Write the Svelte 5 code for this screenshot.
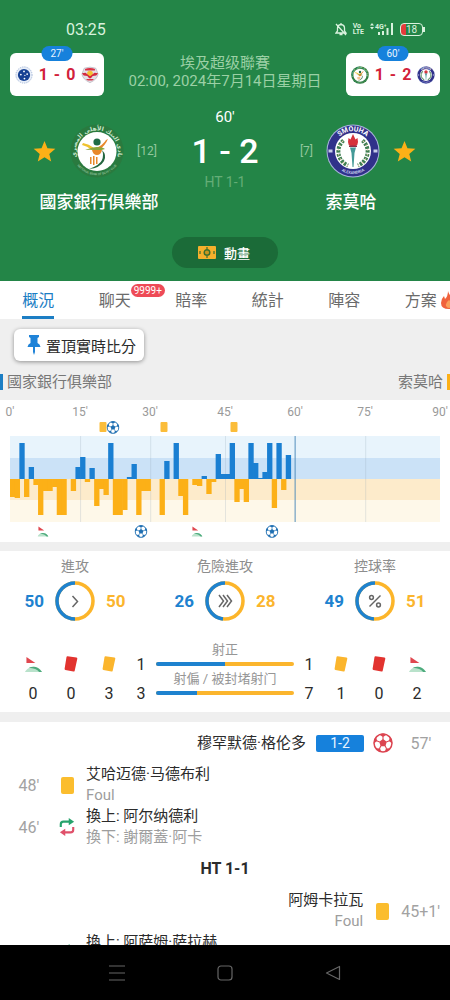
<script>
  const SLOTS = 92;
  const SLOT_W = 5;

  // [slot, height] pairs, one slot per minute of play
  const homeBars = [
    [2, 36], [4, 12], [14, 12], [15, 22], [17, 11], [21, 36], [25, 2], [26, 15],
    [33, 18], [35, 36], [41, 3], [44, 25], [45, 5], [46, 5], [47, 36], [51, 36],
    [52, 16], [53, 1], [54, 7], [55, 36], [57, 36], [59, 24]
  ];
  const awayBars = [
    [0, 18], [1, 19], [3, 18], [5, 6], [6, 36], [7, 12], [8, 12], [9, 8], [10, 36],
    [11, 36], [13, 12], [16, 3], [18, 27], [19, 10], [20, 16], [22, 36], [23, 36],
    [24, 31], [27, 36], [28, 12], [29, 12], [32, 36], [36, 17], [37, 36], [39, 6],
    [40, 7], [42, 15], [43, 3], [48, 23], [49, 10], [50, 23], [56, 29], [58, 11]
  ];
  const gridSlots = [15, 30, 46, 76];
  const minutes = [0, 15, 30, 45, 60, 75, 90];

  const homePins = [
    { kind: 'card', slot: 20 },
    { kind: 'ball', slot: 22 },
    { kind: 'card', slot: 33 },
    { kind: 'card', slot: 48 }
  ];
  const awayPins = [
    { kind: 'flag', slot: 7 },
    { kind: 'ball', slot: 28 },
    { kind: 'flag', slot: 40 },
    { kind: 'ball', slot: 56 }
  ];

  const tabs = ['概況', '聊天', '賠率', '統計', '陣容', '方案'];
  let active = $state('概況');

  const rings = [
    { label: '進攻', home: 50, away: 50, icon: 'one' },
    { label: '危險進攻', home: 26, away: 28, icon: 'three' },
    { label: '控球率', home: 49, away: 51, icon: 'percent' }
  ];

  const events = [
    { side: 'away', time: "57'", icon: 'goal', name: '穆罕默德·格伦多', score: '1-2' },
    { side: 'home', time: "48'", icon: 'yellow', name: '艾哈迈德·马德布利', note: 'Foul' },
    { side: 'home', time: "46'", icon: 'sub', name: '換上: 阿尔纳德利', note: '換下: 謝爾蓋·阿卡' },
    { side: 'half', name: 'HT 1-1' },
    { side: 'away', time: "45+1'", icon: 'yellow', name: '阿姆卡拉瓦', note: 'Foul' },
    { side: 'home', icon: 'sub', name: '換上: 阿萨姆·萨拉赫' }
  ];
</script>

{#snippet star()}
  <svg class="star" viewBox="0 0 24 24" aria-hidden="true">
    <path fill="#fcb017" d="M12 1l3.100 7.600 8.200.6-6.300 5.300 2 8-7-4.400-7 4.400 2-8L.7 9.200l8.200-.6z" />
  </svg>
{/snippet}

{#snippet ball(cls)}
  <svg class="ball {cls}" viewBox="0 0 24 24" aria-hidden="true">
    <circle cx="12" cy="12" r="10.800" fill="#fff" stroke="currentColor" stroke-width="1.800" />
    <g fill="currentColor">
      <path d="M12 7.300l4.500 3.300-1.700 5.200H9.200L7.500 10.600z" />
      <path d="M7.300 1.800L12 4.800l4.700-3A11 11 0 0 0 7.300 1.800z" />
      <path d="M1 12.500l4-3L3.600 4.500A11 11 0 0 0 1 12.500z" />
      <path d="M23 12.500l-4-3 1.400-5A11 11 0 0 1 23 12.500z" />
      <path d="M3.500 18.200l5 .3 1.500 4.700A11 11 0 0 1 3.500 18.200z" />
      <path d="M20.500 18.200l-5 .3-1.500 4.700a11 11 0 0 0 6.500-5z" />
    </g>
    <path fill="none" stroke="currentColor" stroke-width="1.300" d="M12 8V4M16 10.700l3.700-1.300M14.500 15.400l1.800 3.500M9.500 15.400l-1.800 3.500M8 10.700L4.300 9.400" />
  </svg>
{/snippet}

{#snippet flag(cls)}
  <svg class="flag {cls}" viewBox="0 0 18 18" aria-hidden="true">
    <path fill="#e0474f" d="M1.500 1l9.500 6.500H1.500z" />
    <path fill="#b9e2cb" d="M0 17c1-2.500 5-5.500 9-5.500s7.500 2.500 9 5.500z" />
    <path fill="#4dab7d" d="M4 12.500c5-2.500 10.500-1 14 4.500h-3q-3-4-11-4.500z" />
  </svg>
{/snippet}

{#snippet tilted(cls)}
  <svg class="tilted {cls}" viewBox="0 0 18 18" aria-hidden="true">
    <path fill="currentColor" d="M5.500 1.200l9 1.300q1 .2.800 1.200l-2.600 12q-.3 1-1.300.9l-8-1.700q-1-.3-.8-1.200l1.900-11.600q.2-1 1-.9z" />
  </svg>
{/snippet}

{#snippet bankLogo()}
  <svg class="logo" viewBox="0 0 54 54" aria-hidden="true">
    <defs>
      <path id="bank-top" d="M6.500 32a21 21 0 1 1 41 0" />
      <path id="bank-bottom" d="M4 36a25 25 0 0 0 46 0" />
    </defs>
    <circle cx="27" cy="27" r="26.500" fill="#2a7a3f" />
    <circle cx="27" cy="27.500" r="19.500" fill="#fff" />
    <text class="arabic"><textPath href="#bank-top" startOffset="50%" text-anchor="middle">نادي البنك الأهلي المصري</textPath></text>
    <text class="ring-latin"><textPath href="#bank-bottom" startOffset="50%" text-anchor="middle">NATIONAL BANK OF EGYPT CLUB</textPath></text>
    <circle cx="27" cy="18" r="3.600" fill="#1e6b45" />
    <path fill="#f0c22e" d="M13 19q6 1 11 5l-2 2q-5-4-10-5z" />
    <path fill="#e8882a" d="M38 15q-3 7-9 11l-3-2q7-3 10-8z" />
    <path fill="#8aa53a" d="M15 26q8-3 12-3 6 0 8 2l-7 2q-6-2-13-1z" />
    <path fill="#e8882a" d="M22 26h10q-1 5-5 5t-5-5zM20 33h1.500v7H20zM23 32h1.500v9H23zM26 33h1.500v7H26z" />
    <path fill="#24663f" d="M32 26q5 5 2 11-4 7-15 8 11-4 13-9 2-5 0-10z" />
  </svg>
{/snippet}

{#snippet smouhaLogo()}
  <svg class="logo" viewBox="0 0 54 54" aria-hidden="true">
    <defs>
      <path id="smouha-top" d="M7.300 27a19.700 19.700 0 0 1 39.400 0" />
      <path id="smouha-bottom" d="M4 27a23 23 0 0 0 46 0" />
    </defs>
    <circle cx="27" cy="27" r="26.500" fill="#aab4dc" />
    <circle cx="27" cy="27" r="25.500" fill="#30318a" />
    <circle cx="27" cy="27" r="18" fill="#fff" />
    <text class="ring-top"><textPath href="#smouha-top" startOffset="50%" text-anchor="middle">SMOUHA</textPath></text>
    <text class="ring-low"><textPath href="#smouha-bottom" startOffset="50%" text-anchor="middle">ALEXANDRIA</textPath></text>
    <g fill="none" stroke="#3f7f52">
      <path stroke-width="4" stroke-dasharray="2.500 1.200" d="M17.500 16.500C9 24 11.500 37 22 41.500M36.500 16.500C45 24 42.500 37 32 41.500" />
      <path stroke="#e3c9a8" stroke-width="1.300" stroke-dasharray="1.300 3.500" d="M17 17C9 24 11.500 37 22 41.500M37 17C45 24 42.500 37 32 41.500" />
    </g>
    <path fill="#d6323b" d="M22 18l.5-4 2 1.500L27 10l2.500 5.500 2-1.500.5 4q0 3-2.500 4h-5Q22 21 22 18z" />
    <path fill="#8f2f48" d="M23 21.500h8V23h-8z" />
    <path fill="#459a98" d="M24 23.500h6L28.500 29 27.500 43h-1L25.500 29z" />
    <path fill="#c6cdea" d="M2.500 25.500h4v3h-4zM47.500 25.500h4v3h-4z" />
  </svg>
{/snippet}

{#snippet cruzeiro()}
  <svg class="crest" viewBox="0 0 20 20" aria-hidden="true">
    <circle cx="10" cy="10" r="9" fill="#e8eef8" stroke="#9fb3d6" stroke-dasharray="1.500 1" />
    <circle cx="10" cy="10" r="6.800" fill="#174193" />
    <g fill="#fff">
      <circle cx="10" cy="6" r="1" /><circle cx="6.500" cy="9.500" r="1" />
      <circle cx="13.500" cy="9" r="1" /><circle cx="10.500" cy="14" r="1" /><circle cx="11" cy="10.500" r=".7" />
    </g>
  </svg>
{/snippet}

{#snippet bull()}
  <svg class="crest" viewBox="0 0 20 20" aria-hidden="true">
    <path fill="#e3e0e6" stroke="#b9b3bd" stroke-width=".8" d="M3.500 2.500Q10 0 16.500 2.500L19 9q-1 6-9 9.500Q2 15 1 9z" />
    <path fill="#dc3043" d="M4.500 3.200Q10 1.500 15.500 3.200V5h-11z" />
    <circle cx="10" cy="8.500" r="3.200" fill="#f5bf33" />
    <path fill="#d42a3e" d="M1 8l4-.5 4.500 3.500h1L15 7.500l4 .5-2 2.500-4 .5-2 2.500H9L7 11l-4-.5z" />
    <path fill="#d7374a" d="M5.500 14.500h9L12.500 16h-5z" />
  </svg>
{/snippet}

<div class="app">
  <header>
    <div class="status">
      <time>03:25</time>
      <div class="signals">
        <svg width="12" height="14" viewBox="0 0 12 14" aria-hidden="true">
          <path fill="none" stroke="#d9f2de" stroke-width="1.300" d="M1 11h10L9.500 9V6Q9.500 3 6 2.500 2.500 3 2.500 6v3zM6 1v1.500M4.500 12.500h3M1 2l10 11" />
        </svg>
        <span class="volte"><span>Vo</span><span>LTE</span></span>
        <svg width="24" height="14" viewBox="0 0 24 14" aria-hidden="true">
          <path fill="#d9f2de" d="M0 3.500L2 1l2 2.500zM0 5l2 2.500L4 5zM8 10h2v3H8zM12 9h2v4h-2zM16.500 6h2v7h-2zM21 1h2v12h-2z" />
          <text class="gen" x="5" y="7">4G⁺</text>
        </svg>
        <span class="battery">18</span>
      </div>
    </div>

    <div class="top">
      <a class="mini" href="#live-1">
        <span class="clock">27'</span>
        {@render cruzeiro()}
        <b><span>1</span><span>-</span><span>0</span></b>
        {@render bull()}
      </a>
      <div class="league">
        <span>埃及超级聯賽</span>
        <span>02:00, 2024年7月14日星期日</span>
      </div>
      <a class="mini" href="#live-2">
        <span class="clock">60'</span>
        <span class="crest">{@render bankLogo()}</span>
        <b><span>1</span><span>-</span><span>2</span></b>
        <span class="crest">{@render smouhaLogo()}</span>
      </a>
    </div>

    <div class="teams">
      <div class="team">
        <div class="badge-row">
          <button class="fav" aria-label="國家銀行俱樂部">{@render star()}</button>
          {@render bankLogo()}
          <span class="rank">[12]</span>
        </div>
        <strong>國家銀行俱樂部</strong>
      </div>
      <div class="score">
        <span class="minute">60'</span>
        <span class="result">1 - 2</span>
        <span class="ht">HT 1-1</span>
      </div>
      <div class="team">
        <div class="badge-row guest">
          <span class="rank">[7]</span>
          {@render smouhaLogo()}
          <button class="fav" aria-label="索莫哈">{@render star()}</button>
        </div>
        <strong>索莫哈</strong>
      </div>
    </div>

    <button class="animation">
      <svg width="18" height="13" viewBox="0 0 18 13" aria-hidden="true">
        <rect width="18" height="13" rx="1" fill="#f6b02c" />
        <path fill="none" stroke="#3c6f2c" stroke-width="1.200" d="M9 1v2M9 10v2M2 5v3M16 5v3" />
        <circle cx="9" cy="6.500" r="2.800" fill="#c9961f" stroke="#3c6f2c" stroke-width="1.400" />
      </svg>
      動畫
    </button>
  </header>

  <nav class="tabs">
    {#each tabs as tab}
      <button class:active={active === tab} onclick={() => (active = tab)}>
        <span class="tab-label">
          {tab}
          {#if tab === '聊天'}<span class="count">9999+</span>{/if}
          {#if tab === '方案'}
            <svg class="fire" viewBox="0 0 16 18" aria-hidden="true">
              <path fill="#f0623c" d="M7 0q1 4 4 6l1-2q4 4 4 8 0 6-8 6-8 0-8-6 0-4 3-7l1 3q3-3 3-8z" />
              <path fill="#f9a05a" d="M8 9q4 3 3 6-1 2-3 2t-3-2q-1-3 3-6z" />
            </svg>
          {/if}
        </span>
      </button>
    {/each}
  </nav>

  <main>
    <section class="intro">
      <button class="pin">
        <svg width="14" height="20" viewBox="0 0 14 20" aria-hidden="true">
          <path fill="#1f83d8" d="M2 0h10v2l-1.500 1v5Q13 9 13.500 12H8v5l-1 3-1-3v-5H.5Q1 9 3.500 8V3L2 2z" />
        </svg>
        置頂實時比分
      </button>
      <div class="legend"><span class="home">國家銀行俱樂部</span><span class="away">索莫哈</span></div>
    </section>

    <section class="momentum">
      <div class="scale">
        {#each minutes as m}<span>{m}'</span>{/each}
      </div>
      <div class="lane">
        {#each homePins as p}
          <span class="mark" style="left: {(p.slot / SLOTS) * 100}%">
            {#if p.kind === 'card'}<i class="mini-card"></i>{:else}{@render ball('small')}{/if}
          </span>
        {/each}
      </div>
      <svg class="chart" viewBox="0 0 460 86" preserveAspectRatio="none" role="img" aria-label="進攻">
        <rect width="460" height="22" fill="#e8f4fc" />
        <rect y="22" width="460" height="21" fill="#cbe2f7" />
        <rect y="43" width="460" height="21" fill="#fdebcb" />
        <rect y="64" width="460" height="22" fill="#fef8e9" />
        {#each gridSlots as s}
          <rect x={s * SLOT_W} width="1" height="86" fill="#8fa3b5" opacity=".25" />
        {/each}
        {#each homeBars as [s, h]}
          <rect x={s * SLOT_W} y={43 - h} width="5.700" height={h} fill="#1a7fd2" />
        {/each}
        {#each awayBars as [s, h]}
          <rect x={s * SLOT_W} y="43" width="5.700" height={h} fill="#fcb017" />
        {/each}
        <rect x="304.500" width="1" height="86" fill="#4a88b8" />
      </svg>
      <div class="lane">
        {#each awayPins as p}
          <span class="mark" style="left: {(p.slot / SLOTS) * 100}%">
            {#if p.kind === 'flag'}{@render flag('small')}{:else}{@render ball('small')}{/if}
          </span>
        {/each}
      </div>
    </section>

    <section class="stats">
      <div class="rings">
        {#each rings as r}
          <div class="ring-stat">
            <span class="label">{r.label}</span>
            <div class="ring-row">
              <b class="blue">{r.home}</b>
              <svg class="ring" viewBox="0 0 40 40" aria-hidden="true">
                <circle cx="20" cy="20" r="18" pathLength="100" stroke="#fcb52a" />
                <circle cx="20" cy="20" r="18" pathLength="100" stroke="#1e82cf"
                  stroke-dasharray="{(r.home / (r.home + r.away)) * 100} 100"
                  transform="rotate(-90 20 20) translate(0 40) scale(1 -1)" />
                {#if r.icon === 'one'}
                  <path d="M17.500 15l5 5.500-5 5.500" />
                {:else if r.icon === 'three'}
                  <path d="M14 14l4.500 6-4.500 6M18 14l4.500 6-4.500 6M22 14l4.500 6-4.500 6" />
                {:else}
                  <path d="M25.500 14.500l-11 11" /><circle class="dot" cx="16.500" cy="16.500" r="1.900" /><circle class="dot" cx="23.500" cy="24" r="1.900" />
                {/if}
              </svg>
              <b class="gold">{r.away}</b>
            </div>
          </div>
        {/each}
      </div>

      <div class="totals">
        <span>{@render flag('')}</span>
        <span>{@render tilted('red')}</span>
        <span>{@render tilted('gold')}</span>
        <span>1</span>
        <div class="bar"><em>射正</em><div class="track"><i style="width: 50%"></i></div></div>
        <span>1</span>
        <span>{@render tilted('gold')}</span>
        <span>{@render tilted('red')}</span>
        <span>{@render flag('')}</span>

        <span>0</span>
        <span>0</span>
        <span>3</span>
        <span>3</span>
        <div class="bar"><em>射偏 / 被封堵射门</em><div class="track"><i style="width: 30%"></i></div></div>
        <span>7</span>
        <span>1</span>
        <span>0</span>
        <span>2</span>
      </div>
    </section>

    <section class="timeline">
      {#each events as e}
        {#if e.side === 'half'}
          <div class="half">{e.name}</div>
        {:else}
          <div class="event {e.side}">
            <span class="when">{e.time ?? ''}</span>
            <span class="what">
              {#if e.icon === 'goal'}
                {@render ball('goal')}
              {:else if e.icon === 'yellow'}
                <i class="card"></i>
              {:else}
                <svg class="sub" viewBox="0 0 18 20" aria-hidden="true">
                  <path fill="none" stroke="#27a36c" stroke-width="2.400" d="M2 10V7q0-3 3-3h7" />
                  <path fill="#27a36c" d="M11 0l6 4-6 4z" />
                  <path fill="none" stroke="#e0506a" stroke-width="2.400" d="M16 10v3q0 3-3 3H6" />
                  <path fill="#e0506a" d="M7 12l-6 4 6 4z" />
                </svg>
              {/if}
            </span>
            {#if e.score}<span class="new-score">{e.score}</span>{/if}
            <div class="who">
              <span>{e.name}</span>
              {#if e.note}<small>{e.note}</small>{/if}
            </div>
          </div>
        {/if}
      {/each}
    </section>
  </main>

  <nav class="system">
    <button aria-label="Recent apps">
      <svg width="16" height="16" viewBox="0 0 16 16"><path d="M0 1h16M0 8h16M0 15h16" /></svg>
    </button>
    <button aria-label="Home">
      <svg width="16" height="16" viewBox="0 0 16 16"><rect x="1" y="1" width="14" height="14" rx="3" /></svg>
    </button>
    <button aria-label="Back">
      <svg width="16" height="16" viewBox="0 0 16 16"><path d="M14.500 1.500v13L1.500 8z" /></svg>
    </button>
  </nav>
</div>

<style>
  :global(body) { margin: 0; }
  .app {
    display: flex;
    flex-direction: column;
    height: 100vh;
    background: #fff;
    color: #2b2b2b;
    font-family: Roboto, "Noto Sans CJK TC", "Noto Sans CJK SC", sans-serif;
    font-size: 15px;
  }
  button {
    border: 0;
    padding: 0;
    background: none;
    font: inherit;
    color: inherit;
    cursor: pointer;
  }
  svg { display: block; flex: none; }

  header {
    flex: none;
    display: flex;
    flex-direction: column;
    background: #238547;
    color: #fff;
    padding-bottom: 13px;
  }
  .status {
    display: flex;
    justify-content: space-between;
    align-items: center;
    padding: 20px 27px 0 66px;
    height: 18px;
    color: #d9f2de;
    font-size: 16px;
  }
  .signals { display: flex; align-items: center; gap: 6px; }
  .volte { display: flex; flex-direction: column; font: 700 7px/6px Roboto, sans-serif; }
  .gen { font: 700 7px Roboto, sans-serif; fill: #d9f2de; }
  .battery {
    position: relative;
    box-sizing: border-box;
    width: 23px;
    height: 13px;
    border: 1px solid #d9f2de;
    border-radius: 4px;
    background: linear-gradient(90deg, #e33b3b 5px, transparent 5px);
    font-size: 10px;
    line-height: 11px;
    text-align: center;
  }
  .battery::after {
    content: "";
    position: absolute;
    right: -3px;
    top: 3px;
    width: 2px;
    height: 5px;
    background: #d9f2de;
  }

  .top { display: flex; justify-content: space-between; padding: 15px 10px 0; }
  .mini {
    position: relative;
    box-sizing: border-box;
    display: flex;
    align-items: center;
    justify-content: space-between;
    width: 94px;
    height: 43px;
    padding: 0 5px;
    border-radius: 6px;
    background: #fff;
    color: #d2213a;
    font-size: 16px;
    text-decoration: none;
  }
  .mini b { display: flex; gap: 6px; font-weight: 700; }
  .clock {
    position: absolute;
    top: -7px;
    left: 50%;
    width: 31px;
    transform: translateX(-50%);
    border-radius: 8px;
    background: #1681dc;
    color: #e9f4ff;
    font-size: 10px;
    line-height: 15px;
    text-align: center;
  }
  .crest { width: 18px; height: 18px; }
  .crest .logo { width: 18px; height: 18px; }
  .league {
    display: flex;
    flex-direction: column;
    align-items: center;
    color: #9bd0a5;
    font-size: 15px;
    line-height: 18px;
    padding-top: 1px;
    white-space: nowrap;
  }

  .teams { display: flex; justify-content: space-between; padding: 11px 33px 0; }
  .team { display: flex; flex-direction: column; align-items: center; width: 132px; }
  .team strong { font-size: 17px; font-weight: 500; line-height: 24px; margin-top: 12px; white-space: nowrap; }
  .badge-row {
    display: grid;
    grid-template-columns: 24px 54px 28px;
    justify-content: space-between;
    align-items: center;
    width: 100%;
    margin-top: 17px;
  }
  .badge-row.guest { grid-template-columns: 28px 54px 24px; }
  .guest .rank { text-align: right; }
  .logo { width: 54px; height: 54px; }
  .star { width: 23px; height: 23px; }
  .rank { color: #92c79d; font-size: 12px; }
  .arabic { font: 700 6px "DejaVu Sans", sans-serif; fill: #c9e6cc; }
  .ring-latin { font: 400 3px Roboto, sans-serif; fill: #a9d3ae; }
  .ring-top { font: 700 7px Roboto, sans-serif; fill: #fff; }
  .ring-low { font: 700 4px Roboto, sans-serif; fill: #c6cdea; }
  .score { display: flex; flex-direction: column; align-items: center; }
  .minute { font-size: 15px; line-height: 20px; }
  .result { font-size: 34px; line-height: 44px; font-weight: 500; margin-top: 2px; }
  .ht { color: #65ad77; font-size: 14px; line-height: 18px; }

  .animation {
    align-self: center;
    display: flex;
    align-items: center;
    gap: 8px;
    height: 31px;
    padding: 0 28px 0 26px;
    margin-top: 23px;
    border-radius: 16px;
    background: #1b6b38;
    font-size: 13px;
    font-weight: 500;
  }

  .tabs { flex: none; display: flex; height: 38px; overflow: hidden; }
  .tabs button { flex: 0 0 17%; display: flex; justify-content: center; color: #6b6b6b; font-size: 16px; }
  .tab-label {
    position: relative;
    box-sizing: border-box;
    height: 38px;
    line-height: 40px;
    border-bottom: 3px solid transparent;
    white-space: nowrap;
  }
  .active .tab-label { color: #1c7ec4; border-color: #1c7ec4; }
  .count {
    position: absolute;
    left: 32px;
    top: 3px;
    padding: 0 3px;
    border-radius: 7px;
    background: #ee4b57;
    color: #fff;
    font-size: 10px;
    line-height: 13px;
  }
  .fire { position: absolute; left: 36px; top: 10px; width: 16px; height: 18px; }

  main { flex: 1; min-height: 0; overflow: hidden; }
  section { background: #fff; }
  .intro { background: #efefef; padding: 10px 0 10px; }
  .pin {
    display: flex;
    align-items: center;
    gap: 5px;
    height: 32px;
    margin-left: 14px;
    padding: 0 8px 0 13px;
    border-radius: 6px;
    background: #fff;
    box-shadow: 0 1px 4px rgba(0, 0, 0, 0.4);
    font-size: 15px;
  }
  .legend { display: flex; justify-content: space-between; margin-top: 13px; color: #777; line-height: 16px; }
  .legend .home { border-left: 3px solid #1c7ec4; padding-left: 4px; }
  .legend .away { border-right: 3px solid #fcb017; padding-right: 4px; }

  .momentum { padding: 4px 10px 3px; border-bottom: 9px solid #efefef; }
  .scale {
    display: grid;
    grid-template-columns: 70fr 70fr 75fr 70fr 70fr 75fr 0;
    color: #9a9a9a;
    font-size: 12px;
    line-height: 16px;
  }
  .scale span { display: flex; justify-content: center; width: 0; }
  .lane { position: relative; height: 16px; }
  .mark {
    position: absolute;
    top: 0;
    height: 14px;
    display: flex;
    align-items: center;
    transform: translateX(-50%);
  }
  .mini-card { width: 7px; height: 10px; border-radius: 1px; background: #fbbd3a; }
  .ball.small { width: 13px; height: 13px; color: #1f6fb2; }
  .flag.small { width: 11px; height: 11px; }
  .chart { width: 100%; height: 86px; }
  .chart + .lane { margin-top: 2px; height: 15px; }

  .stats { padding-bottom: 12px; border-bottom: 10px solid #efefef; }
  .rings { display: grid; grid-template-columns: repeat(3, 1fr); padding-top: 5px; }
  .ring-stat { display: flex; flex-direction: column; align-items: center; }
  .label { color: #8d8d8d; font-size: 14px; line-height: 20px; }
  .ring-row { display: flex; align-items: center; gap: 11px; margin-top: 5px; }
  .ring-row b { font-size: 17px; font-weight: 700; }
  .blue { color: #1e82cf; }
  .gold { color: #fbb52d; }
  .ring { width: 40px; height: 40px; fill: none; }
  .ring circle { stroke-width: 3.5; }
  .ring path, .ring .dot { stroke: #666; stroke-width: 1.5; }

  .totals {
    display: grid;
    grid-template-columns: 38px 38px 38px 26px 1fr 26px 38px 38px 38px;
    grid-auto-rows: 29px;
    padding: 21px 14px 0;
    font-size: 16px;
  }
  .totals span {
    align-self: end;
    display: flex;
    align-items: center;
    justify-content: center;
    height: 14px;
  }
  .flag { width: 17px; height: 17px; }
  .tilted { width: 18px; height: 18px; }
  .red { color: #e2332f; }
  .bar { padding: 0 2px; }
  .bar em {
    display: block;
    color: #969696;
    font-size: 13px;
    font-style: normal;
    line-height: 16px;
    text-align: center;
    white-space: nowrap;
  }
  .track { display: flex; height: 4px; margin-top: 4px; border-radius: 2px; background: #fbb52d; overflow: hidden; }
  .track i { background: #1e82cf; }

  .event { display: flex; align-items: center; height: 42px; padding: 0 10px; }
  .event.away { flex-direction: row-reverse; }
  .when { flex: 0 0 38px; color: #a2a2a2; font-size: 16px; text-align: center; }
  .what { flex: 0 0 38px; display: flex; justify-content: center; }
  .card { width: 13px; height: 17px; border-radius: 2px; background: #fbbd2e; }
  .ball.goal { width: 20px; height: 20px; color: #dc4450; }
  .sub { width: 16px; height: 18px; }
  .who { display: flex; flex-direction: column; line-height: 21px; white-space: nowrap; }
  .who small { color: #9d9d9d; font-size: 15px; }
  .away .who { align-items: flex-end; }
  .home .who:has(span:only-child) { align-self: flex-start; }
  .new-score {
    width: 48px;
    margin-left: 10px;
    border-radius: 2px;
    background: #1681dc;
    color: #e9f4ff;
    font-size: 14px;
    line-height: 17px;
    text-align: center;
  }
  .half { font-size: 16px; font-weight: 700; line-height: 42px; text-align: center; }

  .system {
    flex: none;
    display: flex;
    justify-content: center;
    gap: 92px;
    height: 55px;
    background: #000;
  }
  .system button { display: flex; align-items: center; }
  .system svg { fill: none; stroke: #666; stroke-width: 1.2; stroke-linejoin: round; }
</style>
